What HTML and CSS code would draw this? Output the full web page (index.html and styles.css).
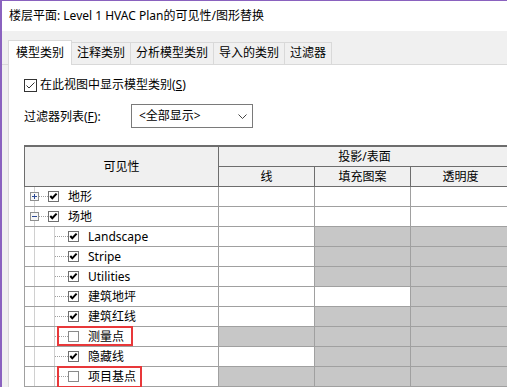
FILE: index.html
```html
<!DOCTYPE html>
<html lang="zh-CN">
<head>
  <meta charset="UTF-8">
  <title>可见性/图形替换</title>
  <link rel="stylesheet" href="styles.css">
</head>
<body>
  <div class="window">
    <div class="titlebar">楼层平面: Level 1 HVAC Plan的可见性/图形替换</div>
    <div class="client">
      <div class="tabs">
        <div class="tab active">模型类别</div>
        <div class="tab">注释类别</div>
        <div class="tab">分析模型类别</div>
        <div class="tab">导入的类别</div>
        <div class="tab">过滤器</div>
      </div>
      <div class="panel">
        <div class="show-row">
          <svg class="big-check" width="13" height="13" viewBox="0 0 13 13"><rect x="0.5" y="0.5" width="12" height="12" fill="#fff" stroke="#333"/><polyline points="2.5,6.5 5,9 10.5,3.5" fill="none" stroke="#333" stroke-width="1"/></svg>
          <span>在此视图中显示模型类别(<u>S</u>)</span>
        </div>
        <div class="filter-row">
          <span class="filter-label">过滤器列表(<u>F</u>):</span>
          <div class="select">
            <span>&lt;全部显示&gt;</span>
            <svg width="9" height="5" viewBox="0 0 9 5"><polyline points="0.5,0.5 4.5,4.5 8.5,0.5" fill="none" stroke="#444" stroke-width="1"/></svg>
          </div>
        </div>

        <table class="grid">
          <colgroup>
            <col class="c-vis"><col class="c-col"><col class="c-col"><col class="c-last">
          </colgroup>
          <thead>
            <tr>
              <th rowspan="2">可见性</th>
              <th colspan="3">投影/表面</th>
            </tr>
            <tr>
              <th>线</th>
              <th>填充图案</th>
              <th>透明度</th>
            </tr>
          </thead>
          <tbody>
            <tr>
              <td class="vis">
                <div class="node">
                  <svg class="exp" width="9" height="9" viewBox="0 0 9 9"><rect x="0.5" y="0.5" width="8" height="8" fill="#f6f6f6" stroke="#8e8f8f"/><path d="M2 4.5h5M4.5 2v5" stroke="#2c4a94"/></svg>
                  <span class="link1"></span>
                  <svg class="cb" width="11" height="11" viewBox="0 0 11 11"><rect x="0.5" y="0.5" width="10" height="10" fill="#fff" stroke="#6f6f6f"/><polyline points="2.3,5 4.3,7.3 8.6,2.6" fill="none" stroke="#000" stroke-width="2"/></svg>
                  <span class="name">地形</span>
                </div>
              </td>
              <td></td><td></td><td></td>
            </tr>
            <tr>
              <td class="vis">
                <div class="node">
                  <svg class="exp" width="9" height="9" viewBox="0 0 9 9"><rect x="0.5" y="0.5" width="8" height="8" fill="#f6f6f6" stroke="#8e8f8f"/><path d="M2 4.5h5" stroke="#2c4a94"/></svg>
                  <span class="link1"></span>
                  <svg class="cb" width="11" height="11" viewBox="0 0 11 11"><rect x="0.5" y="0.5" width="10" height="10" fill="#fff" stroke="#6f6f6f"/><polyline points="2.3,5 4.3,7.3 8.6,2.6" fill="none" stroke="#000" stroke-width="2"/></svg>
                  <span class="name">场地</span>
                </div>
              </td>
              <td></td><td></td><td></td>
            </tr>
            <tr>
              <td class="vis child">
                <div class="node">
                  <span class="link2"></span>
                  <svg class="cb" width="11" height="11" viewBox="0 0 11 11"><rect x="0.5" y="0.5" width="10" height="10" fill="#fff" stroke="#6f6f6f"/><polyline points="2.3,5 4.3,7.3 8.6,2.6" fill="none" stroke="#000" stroke-width="2"/></svg>
                  <span class="name">Landscape</span>
                </div>
              </td>
              <td></td><td class="na"></td><td class="na"></td>
            </tr>
            <tr>
              <td class="vis child">
                <div class="node">
                  <span class="link2"></span>
                  <svg class="cb" width="11" height="11" viewBox="0 0 11 11"><rect x="0.5" y="0.5" width="10" height="10" fill="#fff" stroke="#6f6f6f"/><polyline points="2.3,5 4.3,7.3 8.6,2.6" fill="none" stroke="#000" stroke-width="2"/></svg>
                  <span class="name">Stripe</span>
                </div>
              </td>
              <td></td><td class="na"></td><td class="na"></td>
            </tr>
            <tr>
              <td class="vis child">
                <div class="node">
                  <span class="link2"></span>
                  <svg class="cb" width="11" height="11" viewBox="0 0 11 11"><rect x="0.5" y="0.5" width="10" height="10" fill="#fff" stroke="#6f6f6f"/><polyline points="2.3,5 4.3,7.3 8.6,2.6" fill="none" stroke="#000" stroke-width="2"/></svg>
                  <span class="name">Utilities</span>
                </div>
              </td>
              <td></td><td class="na"></td><td class="na"></td>
            </tr>
            <tr>
              <td class="vis child">
                <div class="node">
                  <span class="link2"></span>
                  <svg class="cb" width="11" height="11" viewBox="0 0 11 11"><rect x="0.5" y="0.5" width="10" height="10" fill="#fff" stroke="#6f6f6f"/><polyline points="2.3,5 4.3,7.3 8.6,2.6" fill="none" stroke="#000" stroke-width="2"/></svg>
                  <span class="name">建筑地坪</span>
                </div>
              </td>
              <td></td><td></td><td class="na"></td>
            </tr>
            <tr>
              <td class="vis child">
                <div class="node">
                  <span class="link2"></span>
                  <svg class="cb" width="11" height="11" viewBox="0 0 11 11"><rect x="0.5" y="0.5" width="10" height="10" fill="#fff" stroke="#6f6f6f"/><polyline points="2.3,5 4.3,7.3 8.6,2.6" fill="none" stroke="#000" stroke-width="2"/></svg>
                  <span class="name">建筑红线</span>
                </div>
              </td>
              <td></td><td class="na"></td><td class="na"></td>
            </tr>
            <tr>
              <td class="vis child">
                <div class="node">
                  <span class="link2"></span>
                  <span class="mark">
                    <svg class="cb" width="11" height="11" viewBox="0 0 11 11"><rect x="0.5" y="0.5" width="10" height="10" fill="#fff" stroke="#8a8a8a"/></svg>
                    <span class="name">测量点</span>
                  </span>
                </div>
              </td>
              <td class="na"></td><td class="na"></td><td class="na"></td>
            </tr>
            <tr>
              <td class="vis child">
                <div class="node">
                  <span class="link2"></span>
                  <svg class="cb" width="11" height="11" viewBox="0 0 11 11"><rect x="0.5" y="0.5" width="10" height="10" fill="#fff" stroke="#6f6f6f"/><polyline points="2.3,5 4.3,7.3 8.6,2.6" fill="none" stroke="#000" stroke-width="2"/></svg>
                  <span class="name">隐藏线</span>
                </div>
              </td>
              <td></td><td class="na"></td><td class="na"></td>
            </tr>
            <tr>
              <td class="vis child">
                <div class="node">
                  <span class="link2"></span>
                  <span class="mark last">
                    <svg class="cb" width="11" height="11" viewBox="0 0 11 11"><rect x="0.5" y="0.5" width="10" height="10" fill="#fff" stroke="#8a8a8a"/></svg>
                    <span class="name">项目基点</span>
                  </span>
                </div>
              </td>
              <td class="na"></td><td class="na"></td><td class="na"></td>
            </tr>
          </tbody>
        </table>
      </div>
    </div>
  </div>
</body>
</html>
```

FILE: styles.css
```css
body {
  margin: 0;
  font-family: "Noto Sans", "Noto Sans CJK SC", sans-serif;
  font-size: 12px;
  color: #000;
  background: #fff;
}

.window {
  width: 505px;
  height: 386px;
  border-top: 1px solid #8a62bf;
  border-left: 2px solid #8a62bf;
  overflow: hidden;
  background: #f0f0f0;
  display: flex;
  flex-direction: column;
}

.titlebar {
  height: 30px;
  line-height: 30px;
  padding-left: 7px;
  background: #fff;
  white-space: nowrap;
}

.client {
  flex: 1;
  display: flex;
  flex-direction: column;
  padding-top: 9px;
}

.tabs {
  display: flex;
  align-items: flex-end;
  height: 24px;
  padding-left: 6px;
  border-bottom: 1px solid #d9d9d9;
}

.tab {
  height: 21px;
  line-height: 20px;
  padding: 0 5px;
  border-top: 1px solid #d9d9d9;
  border-right: 1px solid #d9d9d9;
  background: #f0f0f0;
  white-space: nowrap;
}

.tab.active {
  height: 24px;
  line-height: 24px;
  padding: 0 7px;
  margin-bottom: -1px;
  border-left: 1px solid #d9d9d9;
  background: #fff;
  position: relative;
}

.panel {
  flex: 1;
  margin-left: 6px;
  border-left: 1px solid #d9d9d9;
  background: #fff;
  padding: 13px 0 0 15px;
}

.show-row {
  display: flex;
  align-items: center;
  gap: 3px;
  height: 14px;
  line-height: 14px;
}

.filter-row {
  display: flex;
  align-items: center;
  height: 24px;
  margin-top: 12px;
}

.filter-label {
  width: 107px;
}

.select {
  width: 108px;
  height: 22px;
  border: 1px solid #7a7a7a;
  padding: 0 5px 0 7px;
  display: flex;
  align-items: center;
  justify-content: space-between;
}

.select span {
  line-height: 22px;
}

.grid {
  margin-top: 17px;
  border-collapse: collapse;
  table-layout: fixed;
  width: 486px;
  border-top: 2px solid #6d6d6d;
}

.c-vis { width: 194px; }
.c-col { width: 96px; }
.c-last { width: 100px; }

.grid th {
  height: 19px;
  padding: 0;
  font-weight: normal;
  background: #f0f0f0;
  border: 1px solid #6d6d6d;
  line-height: 18px;
}

.grid td {
  height: 19px;
  padding: 0;
  border: 1px solid #a0a0a0;
}

.grid td.na {
  background: conic-gradient(#8e8e8e 25%, #fff 0 50%, #8e8e8e 0 75%, #fff 0) 0 0 / 2px 2px;
}

/* tree guide lines */
.grid td.vis {
  background: linear-gradient(#a0a0a0 50%, transparent 0) 9px 0 / 1px 2px repeat-y;
}

.grid td.vis.child {
  background:
    linear-gradient(#a0a0a0 50%, transparent 0) 9px 0 / 1px 2px repeat-y,
    linear-gradient(#a0a0a0 50%, transparent 0) 29px 0 / 1px 2px repeat-y;
}

.node {
  display: flex;
  align-items: center;
  height: 19px;
  padding-left: 5px;
}

.exp {
  flex: none;
}

.link1,
.link2 {
  height: 1px;
  flex: none;
  background: linear-gradient(to right, #a0a0a0 50%, transparent 0) 0 0 / 2px 1px repeat-x;
}

.link1 { width: 9px; }
.link2 { width: 13px; margin-left: 25px; }

.cb {
  flex: none;
}

.name {
  margin-left: 9px;
  line-height: 16px;
  white-space: nowrap;
}

.mark {
  display: flex;
  align-items: center;
  position: relative;
}

.mark::after {
  content: "";
  position: absolute;
  left: -11px;
  right: -9px;
  top: -3px;
  bottom: -1px;
  border: 2px solid #e8383a;
}

.mark.last::after {
  right: -6px;
  bottom: -3px;
}
```
